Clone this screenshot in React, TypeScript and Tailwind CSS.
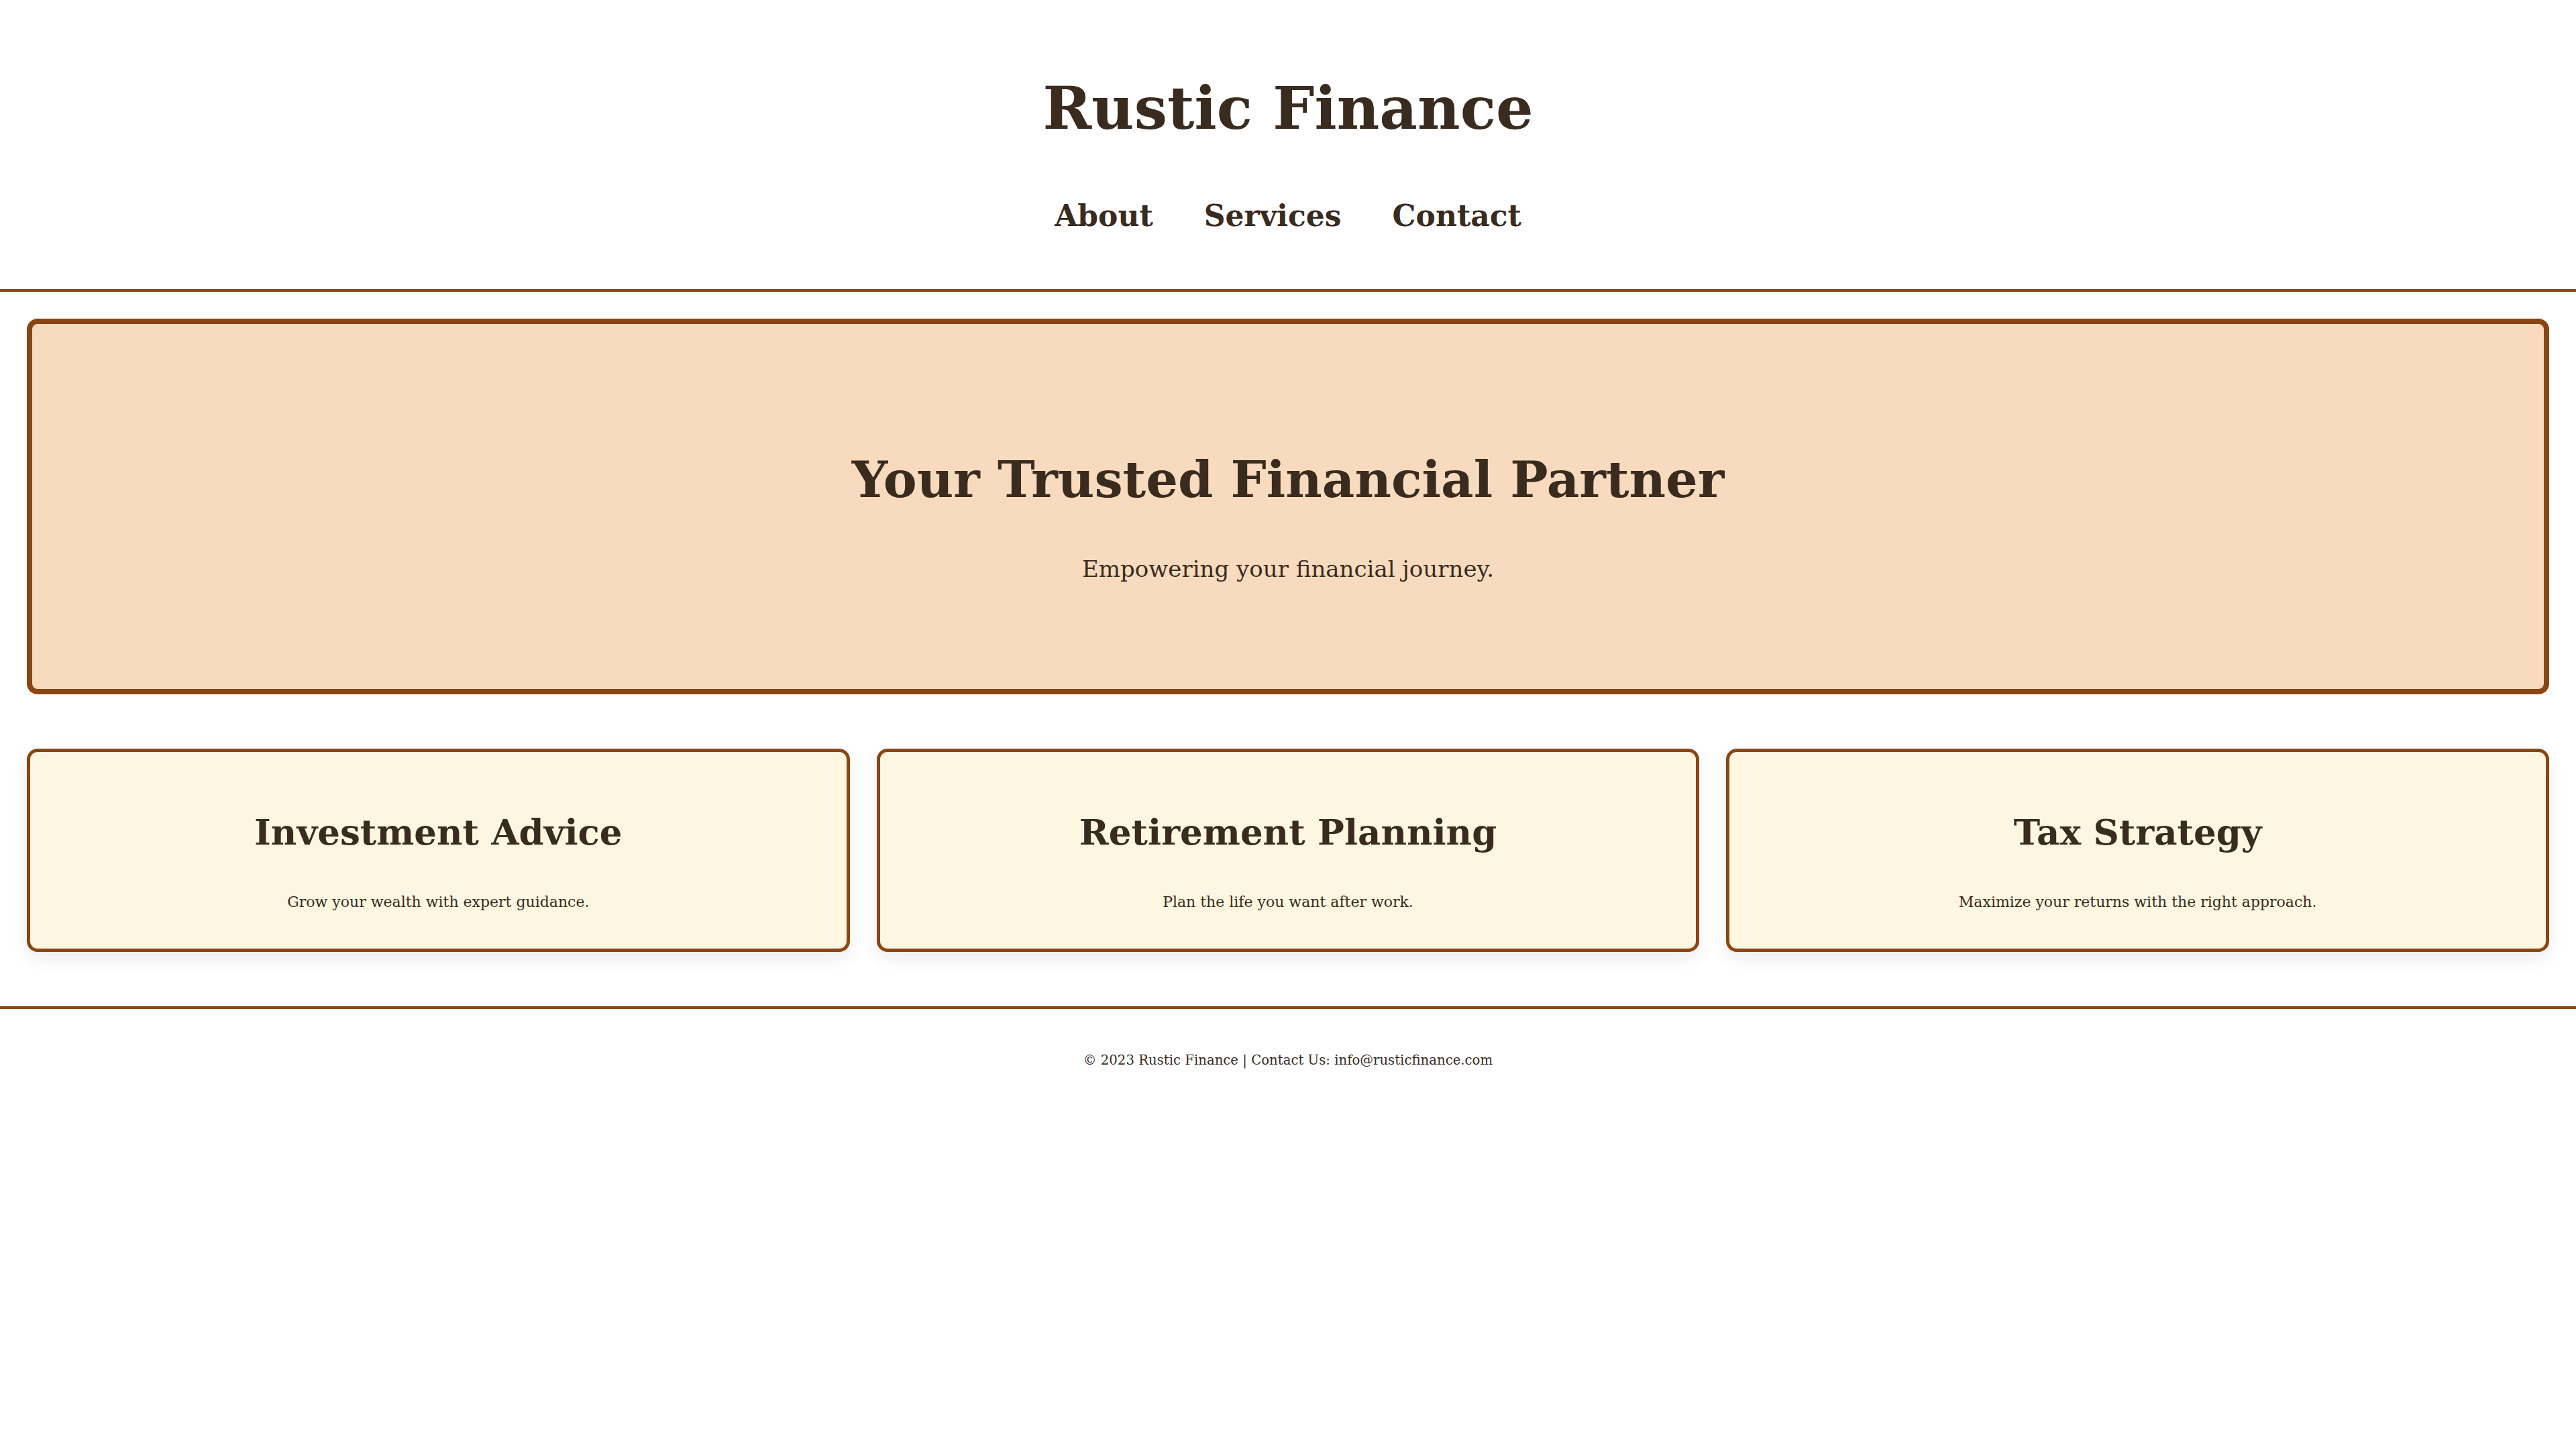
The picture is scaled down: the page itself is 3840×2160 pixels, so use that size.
const serif = { fontFamily: '"DejaVu Serif", Georgia, serif' };

const services = [
  { title: 'Investment Advice', text: 'Grow your wealth with expert guidance.' },
  { title: 'Retirement Planning', text: 'Plan the life you want after work.' },
  { title: 'Tax Strategy', text: 'Maximize your returns with the right approach.' },
];

export default function App() {
  return (
    <div className="min-h-screen bg-white text-[#3a2b1f] font-['DejaVu_Serif',Georgia,serif]" style={serif}>
      <header className="pt-[118px] pb-[87.5px] text-center border-b-4 border-[#8b4513]">
        <h1 className="text-[87.5px] leading-none font-bold">Rustic Finance</h1>
        <nav className="mt-[94px] flex justify-center gap-[76px] text-[44px] leading-none font-bold">
          <a href="#about">About</a>
          <a href="#services">Services</a>
          <a href="#contact">Contact</a>
        </nav>
      </header>

      <main className="px-[40px] pt-[40px] pb-[81px]">
        <section className="h-[560px] box-border border-8 border-[#8b4513] rounded-[16px] bg-[#f8dbbe] pt-[195px] text-center">
          <h2 className="text-[75px] leading-none font-bold">Your Trusted Financial Partner</h2>
          <p className="mt-[78px] text-[34px] leading-none">Empowering your financial journey.</p>
        </section>

        <div className="mt-[81px] grid grid-cols-3 gap-[40px]">
          {services.map((s) => (
            <div
              key={s.title}
              className="border-[5px] border-[#8b4513] rounded-[16px] bg-[#fdf6e0] pt-[93px] pb-[58px] text-center shadow-[0_10px_25px_rgba(0,0,0,0.08)]"
            >
              <h3 className="text-[53px] leading-none font-bold">{s.title}</h3>
              <p className="mt-[67px] text-[22px] leading-none">{s.text}</p>
            </div>
          ))}
        </div>
      </main>

      <footer className="border-t-4 border-[#8b4513] pt-[67px] text-center">
        <p className="text-[19.7px] leading-none">© 2023 Rustic Finance | Contact Us: info@rusticfinance.com</p>
      </footer>
    </div>
  );
}
